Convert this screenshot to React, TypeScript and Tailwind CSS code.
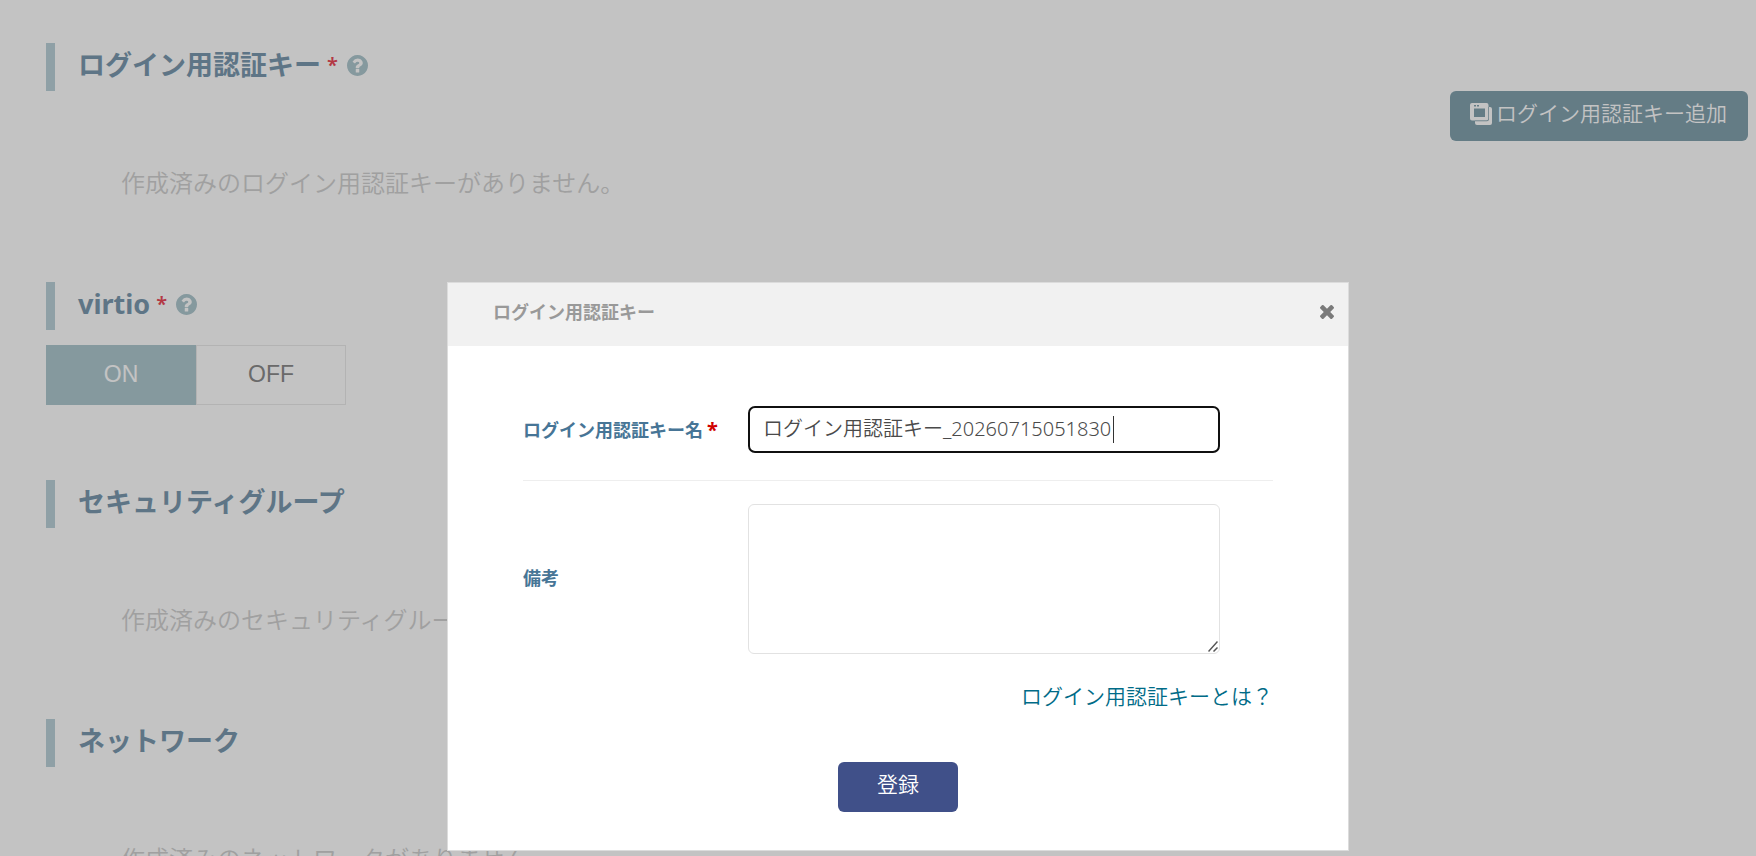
import { useState, type ReactNode } from 'react';

function QuestionIcon() {
  return (
    <svg viewBox="128 128 1536 1536" className="w-[21px] h-[21px] text-[#afc8cf]" fill="currentColor" aria-hidden="true">
      <path d="M1024 1376v-192q0-14-9-23t-23-9h-192q-14 0-23 9t-9 23v192q0 14 9 23t23 9h192q14 0 23-9t9-23zm256-672q0-88-55.500-163t-138.500-116-170-41q-243 0-371 213-15 24 8 42l132 100q7 6 19 6 16 0 25-12 53-68 86-92 34-24 86-24 48 0 85.500 26t37.500 59q0 38-20 61t-68 45q-63 28-115.500 86.500t-52.500 125.500v36q0 14 9 23t23 9h192q14 0 23-9t9-23q0-19 21.500-49.500t54.500-49.500q32-18 49-28.500t46-35 44.500-48 28-60.500 12.500-81zm384 192q0 209-103 385.500t-279.500 279.500-385.500 103-385.500-103-279.500-279.500-103-385.500 103-385.500 279.500-279.500 385.500-103 385.500 103 279.500 279.500 103 385.500z" />
    </svg>
  );
}

function CloseIcon() {
  return (
    <svg viewBox="302 366 1188 1188" className="w-[14px] h-[14px]" fill="currentColor" aria-hidden="true">
      <path d="M1490 1322q0 40-28 68l-136 136q-28 28-68 28t-68-28l-294-294-294 294q-28 28-68 28t-68-28l-136-136q-28-28-28-68t28-68l294-294-294-294q-28-28-28-68t28-68l136-136q28-28 68-28t68 28l294 294 294-294q28-28 68-28t68 28l136 136q28 28 28 68t-28 68l-294 294 294 294q28 28 28 68z" />
    </svg>
  );
}

function WindowsIcon() {
  return (
    <svg viewBox="0 0 22 22" className="w-[22px] h-[22px]" aria-hidden="true">
      <path d="M19 4h1a2 2 0 0 1 2 2v14a2 2 0 0 1-2 2H7a2 2 0 0 1-2-2v-2h12a2 2 0 0 0 2-2z" fill="currentColor" />
      <path fillRule="evenodd" d="M2 0h14.500a2 2 0 0 1 2 2v13.500a2 2 0 0 1-2 2H2a2 2 0 0 1-2-2V2a2 2 0 0 1 2-2zM4 5.500v8.500h11V5.500z" fill="currentColor" />
      <path d="M4 2h2v1.500H4zM7 2h2v1.500H7z" fill="#83a2af" />
      <path d="M18.500 4v12a2 2 0 0 1-2 2H5" fill="none" stroke="#83a2af" strokeWidth="0.500" />
    </svg>
  );
}

function ResizeGrip() {
  return (
    <svg viewBox="0 0 10 11" className="absolute right-[2px] bottom-[2px] w-[10px] h-[11px] pointer-events-none" aria-hidden="true">
      <path d="M0.500 10.500L9.500 0.500M5.500 10.500L9.500 6.500" stroke="#555" strokeWidth="1.500" fill="none" />
    </svg>
  );
}

interface SectionProps {
  title: string;
  required?: boolean;
  children: ReactNode;
}

function Section({ title, required, children }: SectionProps) {
  return (
    <section>
      <div className="flex items-center h-12 pl-[23px] pb-1 border-l-[9px] border-[#bcd2d9]">
        <h2 className="text-[27px] leading-[42px] font-bold text-[#7c9ab0]">{title}</h2>
        {required && (
          <>
            <span className="ml-[6px] mr-[9px] text-[20px] leading-[42px] font-semibold text-[#eb4a5a]">*</span>
            <button type="button" aria-label="ヘルプ">
              <QuestionIcon />
            </button>
          </>
        )}
      </div>
      {children}
    </section>
  );
}

function EmptyMessage({ children }: { children: ReactNode }) {
  return <p className="pl-[75px] text-[24px] leading-9 text-[#d1d1d1]">{children}</p>;
}

function KeyModal({ onClose }: { onClose: () => void }) {
  const [name, setName] = useState('ログイン用認証キー_20260715051830');
  const [note, setNote] = useState('');

  return (
    <div className="fixed inset-0 flex justify-center items-start pl-10 pt-[282px] bg-black/[0.235]">
      <div role="dialog" aria-labelledby="modal-title" className="w-[902px] bg-white border border-[#dcdcdc]">
        <div className="flex items-center justify-between h-[63px] pl-[45px] pr-[14px] pb-[6px] bg-[#f1f1f1]">
          <h3 id="modal-title" className="text-[18px] leading-7 font-bold text-[#999]">
            ログイン用認証キー
          </h3>
          <button type="button" aria-label="閉じる" onClick={onClose} className="text-[#7a7a7a]">
            <CloseIcon />
          </button>
        </div>

        <form className="px-[75px] pt-[60px] pb-[38px]" onSubmit={(e) => e.preventDefault()}>
          <div className="flex items-center pb-[27px] border-b border-[#eee]">
            <label htmlFor="key-name" className="w-[225px] text-[18px] leading-7 font-bold text-[#477596]">
              ログイン用認証キー名
              <span className="ml-1 text-[20px] leading-7 text-[#d00000]">*</span>
            </label>
            <div className="relative">
              <input
                id="key-name"
                type="text"
                autoFocus
                value={name}
                onChange={(e) => setName(e.target.value)}
                className="block w-[472px] h-[47px] px-[13px] pb-1 text-[20px] text-[#4a4a4a] caret-transparent border-2 border-[#101010] rounded-[7px] outline-none"
              />
              <div className="absolute inset-y-0 left-[15px] flex items-center text-[20px] pointer-events-none" aria-hidden="true">
                <span className="w-[351px] h-[27px] border-r border-[#333]" />
              </div>
            </div>
          </div>

          <div className="flex items-center pt-[23px]">
            <label htmlFor="key-note" className="w-[225px] pb-[2px] text-[18px] leading-7 font-bold text-[#477596]">
              備考
            </label>
            <div className="relative">
              <textarea
                id="key-note"
                value={note}
                onChange={(e) => setNote(e.target.value)}
                className="block w-[472px] h-[150px] p-3 text-[20px] text-[#555] border border-[#e2e2e2] rounded-md outline-none [&::-webkit-resizer]:bg-transparent"
              />
              <ResizeGrip />
            </div>
          </div>

          <div className="pt-[26px] text-right">
            <a href="#about" className="text-[21px] leading-8 text-[#006b87]">
              ログイン用認証キーとは？
            </a>
          </div>

          <div className="flex justify-center pt-[50px]">
            <button type="submit" className="w-[120px] h-[50px] pb-1 text-[21px] text-white bg-[#405089] rounded-md">
              登録
            </button>
          </div>
        </form>
      </div>
    </div>
  );
}

export default function App() {
  const [open, setOpen] = useState(true);
  const [virtio, setVirtio] = useState(true);

  return (
    <div className="h-screen overflow-hidden bg-white font-[350] font-['Noto_Sans','Noto_Sans_CJK_JP',sans-serif]">
      <main className="pt-[43px] pl-[46px] pr-2">
        <Section title="ログイン用認証キー" required>
          <div className="flex justify-end">
            <button
              type="button"
              onClick={() => setOpen(true)}
              className="flex items-center gap-1 h-[50px] pl-5 pr-[21px] pb-1 text-[21px] text-white bg-[#83a2af] rounded-md"
            >
              <WindowsIcon />
              ログイン用認証キー追加
            </button>
          </div>
          <div className="pt-6 pb-[81px]">
            <EmptyMessage>作成済みのログイン用認証キーがありません。</EmptyMessage>
          </div>
        </Section>

        <Section title="virtio" required>
          <div className="flex pt-[15px] pb-[75px] font-['Liberation_Sans',sans-serif] text-[23px]">
            <button
              type="button"
              aria-pressed={virtio}
              onClick={() => setVirtio(true)}
              className="w-[150px] h-[60px] pb-[2px] text-white bg-[#afc8cf]"
            >
              ON
            </button>
            <button
              type="button"
              aria-pressed={!virtio}
              onClick={() => setVirtio(false)}
              className="w-[150px] h-[60px] pb-[2px] text-[#8b8b8b] border border-[#ebebeb]"
            >
              OFF
            </button>
          </div>
        </Section>

        <Section title="セキュリティグループ">
          <div className="pt-[74px] pb-[81px]">
            <EmptyMessage>作成済みのセキュリティグループがありません。</EmptyMessage>
          </div>
        </Section>

        <Section title="ネットワーク">
          <div className="pt-[74px] pb-[81px]">
            <EmptyMessage>作成済みのネットワークがありません。</EmptyMessage>
          </div>
        </Section>
      </main>

      {open && <KeyModal onClose={() => setOpen(false)} />}
    </div>
  );
}
